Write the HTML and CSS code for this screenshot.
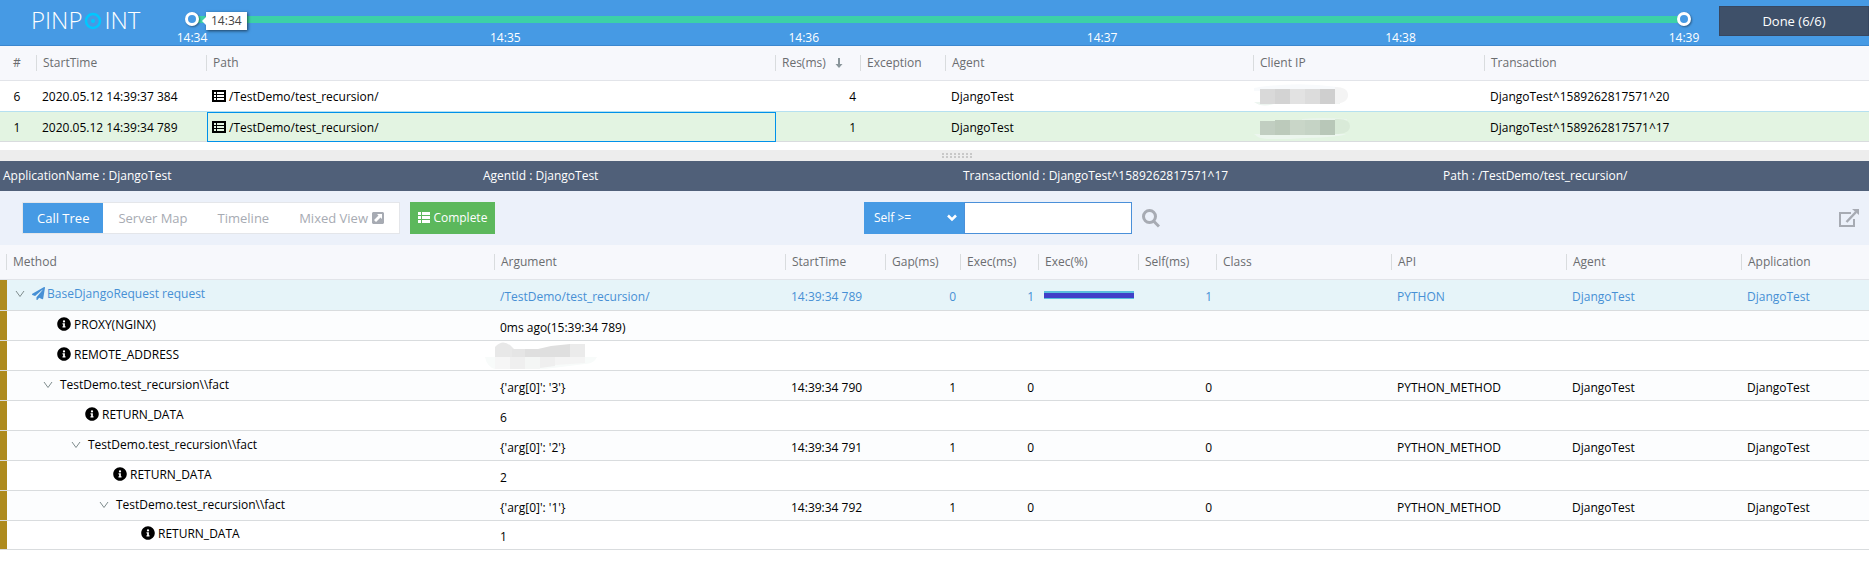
FILE: index.html
```
<!DOCTYPE html>
<html lang="en">
<head>
<meta charset="utf-8">
<title>Pinpoint - Transaction List</title>
<link rel="stylesheet" href="styles.css">
</head>
<body>
<svg class="defs" aria-hidden="true">
  <symbol id="i-list" viewBox="0 0 14 12"><path fill="currentColor" fill-rule="evenodd" d="M0 0h14v12H0zM2 2v2h2V2zM2 5v2h2V5zM2 8v2h2V8zM5 2v2h7V2zM5 5v2h7V5zM5 8v2h7V8z"/></symbol>
  <symbol id="i-thlist" viewBox="0 0 12 11"><path fill="currentColor" d="M0 0h3v3H0zM4 0h8v3H4zM0 4h3v3H0zM4 4h8v3H4zM0 8h3v3H0zM4 8h8v3H4z"/></symbol>
  <symbol id="i-info" viewBox="0 0 512 512"><path fill="currentColor" d="M256 8C119 8 8 119 8 256s111 248 248 248 248-111 248-248S393 8 256 8zm0 110a42 42 0 1 1 0 84 42 42 0 0 1 0-84zm56 254c0 7-5 12-12 12h-88c-7 0-12-5-12-12v-24c0-7 5-12 12-12h12v-64h-12c-7 0-12-5-12-12v-24c0-7 5-12 12-12h64c7 0 12 5 12 12v100h12c7 0 12 5 12 12z"/></symbol>
  <symbol id="i-plane" viewBox="0 0 512 512"><path fill="currentColor" d="M476 3.200 12.500 270.600c-18.100 10.400-15.800 35.600 2.200 43.200L121 358.400l287.300-253.200c5.500-4.900 13.300 2.600 8.600 8.300L176 407v80.500c0 23.600 28.500 32.900 42.500 15.800L282 426l124.600 52.200c14.200 6 30.400-2.900 33-18.200l72-432C515 7.800 493.300-6.800 476 3.200z"/></symbol>
  <symbol id="i-chevron" viewBox="0 0 10 8"><path fill="none" stroke="currentColor" d="M1 1l4 5.500L9 1"/></symbol>
</svg>

<header class="topbar">
  <h1 class="logo" aria-label="PINPOINT"><span>PINP</span><svg viewBox="0 0 18 18"><circle cx="9" cy="9" r="7" fill="none" stroke="#00c8ff" stroke-width="2.500"/><circle cx="9" cy="9" r="2" fill="#00c8ff"/></svg><span>INT</span></h1>
  <div class="timeline">
    <div class="bar"></div>
    <input class="knob" type="range" min="0" max="100" value="0" aria-label="Range start">
    <input class="knob" type="range" min="0" max="100" value="100" aria-label="Range end">
    <output class="tip">14:34</output>
    <div class="ticks">
      <span style="left:0%">14:34</span>
      <span style="left:21%">14:35</span>
      <span style="left:41%">14:36</span>
      <span style="left:61%">14:37</span>
      <span style="left:81%">14:38</span>
      <span style="left:100%">14:39</span>
    </div>
  </div>
  <button class="done" type="button">Done (6/6)</button>
</header>

<main>
<table class="grid list">
  <colgroup><col class="w-no"><col class="w-time"><col><col class="w-85"><col class="w-85"><col class="w-agent"><col class="w-ip"><col class="w-tx"></colgroup>
  <thead><tr><th class="center"><span>#</span></th><th><span>StartTime</span></th><th><span>Path</span></th><th><span>Res(ms)<svg class="sort" viewBox="0 0 8 12"><path fill="#8a969b" d="M3 1h2v6h2.500L4 11 .5 7H3z"/></svg></span></th><th><span>Exception</span></th><th><span>Agent</span></th><th><span>Client IP</span></th><th><span>Transaction</span></th></tr></thead>
  <tbody>
    <tr class="first"><td class="center">6</td><td>2020.05.12 14:39:37 384</td><td><svg class="ico-list"><use href="#i-list"/></svg>/TestDemo/test_recursion/</td><td class="num">4</td><td></td><td>DjangoTest</td>
      <td class="masked"><svg class="mask" viewBox="0 0 98 24"><path fill="#f8fafc" d="M0 4q40-7 84-1v4H0z"/><path fill="#edf5f0" d="M0 20h86v-2H0q8 6 20 2z"/><path fill="#f4f4f4" d="M81 3q13 0 13 8t-13 9z"/><path fill="#d9d9d9" d="M6 5h15v15H6z"/><path fill="#d3d3d3" d="M21 5h15v15H21z"/><path fill="#e2e2e2" d="M36 5h15v15H36z"/><path fill="#dcdcdc" d="M51 5h15v15H51z"/><path fill="#cfcfcf" d="M66 5h15v15H66z"/></svg></td>
      <td>DjangoTest^1589262817571^20</td></tr>
    <tr class="picked"><td class="center">1</td><td>2020.05.12 14:39:34 789</td><td class="focus"><svg class="ico-list"><use href="#i-list"/></svg>/TestDemo/test_recursion/</td><td class="num">1</td><td></td><td>DjangoTest</td>
      <td class="masked"><svg class="mask" viewBox="0 0 98 24"><path fill="#eaf5ec" d="M48 4q20-2 45 0v4H48z"/><path fill="#ecf6ee" d="M0 19h92q-6 3-40 4-40 3-48-1z"/><path fill="#d9ead8" d="M81 4q15-1 15 7t-15 8z"/><path fill="#c1cec1" d="M6 6h15v14H6z"/><path fill="#bccabb" d="M21 5h15v15H21z"/><path fill="#c9d6c8" d="M36 5h15v15H36z"/><path fill="#c5d3c5" d="M51 5h15v15H51z"/><path fill="#b8c7b8" d="M66 5h15v15H66z"/></svg></td>
      <td>DjangoTest^1589262817571^17</td></tr>
  </tbody>
</table>
<div class="splitter"><svg viewBox="0 0 30 5"><path stroke="#c8c8c8" stroke-width="2" stroke-dasharray="2 2" d="M0 1h30M0 4h30"/></svg></div>

<div class="facts"><span>ApplicationName : DjangoTest</span><span>AgentId : DjangoTest</span><span>TransactionId : DjangoTest^1589262817571^17</span><span>Path : /TestDemo/test_recursion/</span></div>

<div class="tools">
  <div class="left">
    <nav class="tabs">
      <button type="button" class="on">Call Tree</button><button type="button">Server Map</button><button type="button">Timeline</button><button type="button">Mixed View <svg viewBox="0 0 12 12"><path fill="#a7abb3" fill-rule="evenodd" d="M1 0h10l1 1v10l-1 1H1l-1-1V1zM5 2l1.500 1.500L2 8l2 2 4.500-4.500L10 7V2z"/></svg></button>
    </nav>
    <button type="button" class="complete"><svg><use href="#i-thlist"/></svg>Complete</button>
  </div>
  <form class="filter">
    <span class="pick"><select aria-label="Filter"><option>Self &gt;=</option></select><svg viewBox="0 0 10 8"><path fill="none" stroke="#fff" stroke-width="2.500" d="M1 1.500l4 4 4-4"/></svg></span><input type="text" aria-label="Filter value">
    <button type="button" class="plain" aria-label="Search"><svg viewBox="0 0 18 19"><circle cx="7.500" cy="7.500" r="6" fill="none" stroke="#a7abb3" stroke-width="3"/><path stroke="#a7abb3" stroke-width="3" d="M11.500 12l5.500 5.500"/></svg></button>
  </form>
  <button type="button" class="plain open" aria-label="Open in new window"><svg viewBox="0 0 20 18"><path fill="none" stroke="#a7abb3" stroke-width="2" d="M12 4H1v13h14v-7"/><path fill="none" stroke="#a7abb3" stroke-width="2.500" d="M7.500 13L17 3"/><path fill="#a7abb3" d="M13 0h7v6z"/></svg></button>
</div>

<table class="grid tree">
  <colgroup><col class="w-mark"><col><col class="w-arg"><col class="w-100"><col class="w-75"><col class="w-78"><col class="w-100"><col class="w-78"><col class="w-175"><col class="w-175"><col class="w-175"><col class="w-app"></colgroup>
  <thead><tr><th><span></span></th><th><span>Method</span></th><th><span>Argument</span></th><th><span>StartTime</span></th><th><span>Gap(ms)</span></th><th><span>Exec(ms)</span></th><th><span>Exec(%)</span></th><th><span>Self(ms)</span></th><th><span>Class</span></th><th><span>API</span></th><th><span>Agent</span></th><th><span>Application</span></th></tr></thead>
  <tbody>
    <tr class="root"><td class="mark"></td><td class="m d0"><svg class="chev"><use href="#i-chevron"/></svg><svg class="plane"><use href="#i-plane"/></svg>BaseDjangoRequest request</td><td>/TestDemo/test_recursion/</td><td>14:39:34 789</td><td class="num">0</td><td class="num">1</td><td class="pct"><div class="meter"><i style="width:100%"></i></div></td><td class="num">1</td><td></td><td>PYTHON</td><td>DjangoTest</td><td>DjangoTest</td></tr>
    <tr><td class="mark"></td><td class="m i1"><svg class="info"><use href="#i-info"/></svg>PROXY(NGINX)</td><td>0ms ago(15:39:34 789)</td><td></td><td></td><td></td><td></td><td></td><td></td><td></td><td></td><td></td></tr>
    <tr><td class="mark"></td><td class="m i1"><svg class="info"><use href="#i-info"/></svg>REMOTE_ADDRESS</td><td class="masked"><svg class="mask2" viewBox="0 0 112 28"><path fill="#f8fbfa" d="M0 15h112q-3 7-12 7L60 27H10q-8-2-10-12z"/><path fill="#e8e8e8" d="M10 5q8-9 17 0l2 2v8H10z"/><path fill="#e5e5e5" d="M27 7h13v8H27z"/><path fill="#dfdfdf" d="M40 7h13l13-3 19-2v13H40z"/><path fill="#ebebeb" d="M85 2h15v13H85z"/><path fill="#f6f6f6" d="M10 15h15v12H10z"/><path fill="#efefef" d="M25 15h15v12H25z"/><path fill="#f4f6f5" d="M40 15h15v12H40z"/><path fill="#efefef" d="M55 15h15v9l-15 2z"/><path fill="#f4f4f4" d="M70 15h30v6l-30 2z"/></svg></td><td></td><td></td><td></td><td></td><td></td><td></td><td></td><td></td><td></td></tr>
    <tr><td class="mark"></td><td class="m d1"><svg class="chev"><use href="#i-chevron"/></svg>TestDemo.test_recursion\\fact</td><td>{'arg[0]': '3'}</td><td>14:39:34 790</td><td class="num">1</td><td class="num">0</td><td></td><td class="num">0</td><td></td><td>PYTHON_METHOD</td><td>DjangoTest</td><td>DjangoTest</td></tr>
    <tr><td class="mark"></td><td class="m i2"><svg class="info"><use href="#i-info"/></svg>RETURN_DATA</td><td>6</td><td></td><td></td><td></td><td></td><td></td><td></td><td></td><td></td><td></td></tr>
    <tr><td class="mark"></td><td class="m d2"><svg class="chev"><use href="#i-chevron"/></svg>TestDemo.test_recursion\\fact</td><td>{'arg[0]': '2'}</td><td>14:39:34 791</td><td class="num">1</td><td class="num">0</td><td></td><td class="num">0</td><td></td><td>PYTHON_METHOD</td><td>DjangoTest</td><td>DjangoTest</td></tr>
    <tr><td class="mark"></td><td class="m i3"><svg class="info"><use href="#i-info"/></svg>RETURN_DATA</td><td>2</td><td></td><td></td><td></td><td></td><td></td><td></td><td></td><td></td><td></td></tr>
    <tr><td class="mark"></td><td class="m d3"><svg class="chev"><use href="#i-chevron"/></svg>TestDemo.test_recursion\\fact</td><td>{'arg[0]': '1'}</td><td>14:39:34 792</td><td class="num">1</td><td class="num">0</td><td></td><td class="num">0</td><td></td><td>PYTHON_METHOD</td><td>DjangoTest</td><td>DjangoTest</td></tr>
    <tr><td class="mark"></td><td class="m i4"><svg class="info"><use href="#i-info"/></svg>RETURN_DATA</td><td>1</td><td></td><td></td><td></td><td></td><td></td><td></td><td></td><td></td><td></td></tr>
  </tbody>
</table>
</main>
</body>
</html>
```

FILE: styles.css
```
* { box-sizing: border-box; }
body { margin: 0; background: #fff; color: #000; font: 12px/18px "Open Sans", "Noto Sans", sans-serif; }
button, input, select { font: inherit; border: 0; margin: 0; padding: 0; border-radius: 0; }
.defs { display: none; }

/* top bar */
.topbar { display: flex; align-items: flex-start; height: 46px; background: #469ae4; border-bottom: 1px solid #3b87cf; }
.logo { display: flex; align-items: center; width: 152px; margin: 5px 0 0 31px; color: #fff; font-size: 24px; line-height: 30px; font-weight: 300; }
.logo svg { width: 18px; height: 18px; margin: 2px 2px 0; }
.timeline { position: relative; flex: 1; height: 45px; margin: 0 28px 0 2px; }
.bar { height: 7px; margin: 16px 7px 0; background: #3cd1a7; }
.knob { position: absolute; left: 0; top: 12px; width: 100%; height: 14px; appearance: none; background: none; pointer-events: none; }
.knob::-webkit-slider-thumb { appearance: none; width: 14px; height: 14px; border: 3px solid #fff; border-radius: 50%; background: #469ae4; box-shadow: 1px 1px 2px rgba(0,0,0,.4); pointer-events: auto; }
.tip { position: absolute; left: 21px; top: 12px; padding: 0 5px; background: #fff; color: #444; box-shadow: 1px 1px 3px rgba(0,0,0,.6); }
.tip::before { content: ""; position: absolute; left: -4px; top: 5px; border: 4px solid transparent; border-left: 0; border-right-color: #fff; }
.ticks { position: relative; margin: 6px 7px 0; color: #fff; }
.ticks span { position: absolute; transform: translateX(-50%); }
.done { width: 150px; height: 30px; margin-top: 6px; background: #3e5069; border: 1px solid #374760; color: #fff; font-size: 13px; }

/* grids */
.grid { width: 100%; table-layout: fixed; border-collapse: separate; border-spacing: 0; }
.grid th { padding: 0; background: #f7f8fc; border-bottom: 1px solid #e2e4e9; color: #6b6d70; font-weight: 400; text-align: left; }
.grid th span { display: block; height: 16px; margin: 9px 0; padding-left: 6px; line-height: 15px; border-right: 1px solid #d9dcde; white-space: nowrap; }
.grid th:last-child span { border-right: 0; }
.grid th.center span { padding: 0 2px 0 0; }
.grid td { height: 30px; padding: 0 5px; border-bottom: 1px solid #d9dcde; line-height: 24px; white-space: nowrap; }
.grid .center { text-align: center; }
.grid td.center { padding: 2px 3px 0 0; }
.grid .num { text-align: right; }
.w-no { width: 37px; } .w-time { width: 170px; } .w-85 { width: 85px; } .w-agent { width: 308px; } .w-ip { width: 231px; } .w-tx { width: 384px; }
.w-mark { width: 7px; } .w-arg { width: 291px; } .w-100 { width: 100px; } .w-75 { width: 75px; } .w-78 { width: 78px; } .w-175 { width: 175px; } .w-app { width: 127px; }
.sort { width: 8px; height: 12px; margin-left: 9px; vertical-align: -2px; }
.list td { padding-top: 2px; }
.list tbody tr.first td { height: 31px; border-bottom-color: #b5e0f0; }
.list .picked td { background: #e3f4e2; }
.list .picked .focus { border: 1px solid #0091ea; padding-left: 4px; }
.ico-list { width: 14px; height: 12px; margin-right: 3px; vertical-align: -1px; }
.list td.masked { padding: 0; }
.mask { display: block; width: 98px; height: 24px; }

.splitter { display: flex; justify-content: center; align-items: flex-start; height: 11px; margin-top: 8px; padding: 3px 0 0 45px; background: #ededed; }
.splitter svg { width: 30px; height: 5px; }
.facts { display: grid; grid-template-columns: repeat(3, minmax(0, 480px)) 1fr; padding-left: 3px; background: #506079; color: #fff; line-height: 30px; }

/* tools */
.tools { display: flex; align-items: center; height: 54px; padding: 0 10px 0 22px; background: #ecf1fa; }
.left { display: flex; gap: 10px; flex: 0 1 842px; }
.tabs { display: flex; border: 1px solid #e4e6ea; background: #fff; }
.tabs button { height: 30px; padding: 0 15px; background: #fff; color: #a7abb3; font-size: 13px; }
.tabs .on { padding: 0 14px; background: #469ae4; color: #fff; }
.tabs svg { width: 12px; height: 12px; margin-left: 1px; vertical-align: -1px; }
.complete { height: 32px; padding: 0 8px; background: #5cb85c; color: #fff; }
.complete svg { width: 12px; height: 11px; margin-right: 3px; vertical-align: -1px; }
.filter { display: flex; align-items: center; }
.pick { position: relative; display: flex; }
.pick select { width: 100px; height: 32px; padding-left: 10px; appearance: none; background: #469ae4; color: #fff; }
.pick svg { position: absolute; right: 7px; top: 12px; width: 10px; height: 8px; pointer-events: none; }
.filter input { width: 168px; height: 32px; border: 1px solid #4a90d9; background: #fff; }
.plain { display: flex; background: none; margin-left: 10px; }
.plain svg { width: 18px; height: 19px; }
.open { margin-left: auto; }
.open svg { width: 20px; height: 18px; }

/* call tree */
.tree td { padding-top: 4px; }
.tree tr:nth-child(even) td { background: #fcfdfe; }
.tree .m { padding-top: 0; padding-bottom: 2px; }
.tree .root td { height: 31px; background: #e6f4f9; color: #4790d5; }
.tree tr:last-child td { height: 29px; }
.tree tr td.mark, .tree .root td.mark { padding: 0; background: #ae8b1e; }
.tree .d0 { padding-left: 8px; } .tree .d1 { padding-left: 36px; } .tree .d2 { padding-left: 64px; } .tree .d3 { padding-left: 92px; }
.tree .i1 { padding-left: 50px; } .tree .i2 { padding-left: 78px; } .tree .i3 { padding-left: 106px; } .tree .i4 { padding-left: 134px; }
.chev { width: 10px; height: 8px; margin-right: 7px; color: #7f8c8d; }
.plane { width: 13px; height: 13px; margin-right: 2px; vertical-align: -2px; }
.info { width: 14px; height: 14px; margin-right: 3px; vertical-align: -2px; }
.tree .pct { padding: 0 5px; }
.meter { height: 8px; border-top: 2px solid #5bc0de; border-bottom: 1px solid #5bc0de; }
.meter i { display: block; height: 5px; background: #4040c8; }
.tree td.masked { padding: 0; }
.mask2 { display: block; width: 112px; height: 28px; margin-left: -10px; }
```
